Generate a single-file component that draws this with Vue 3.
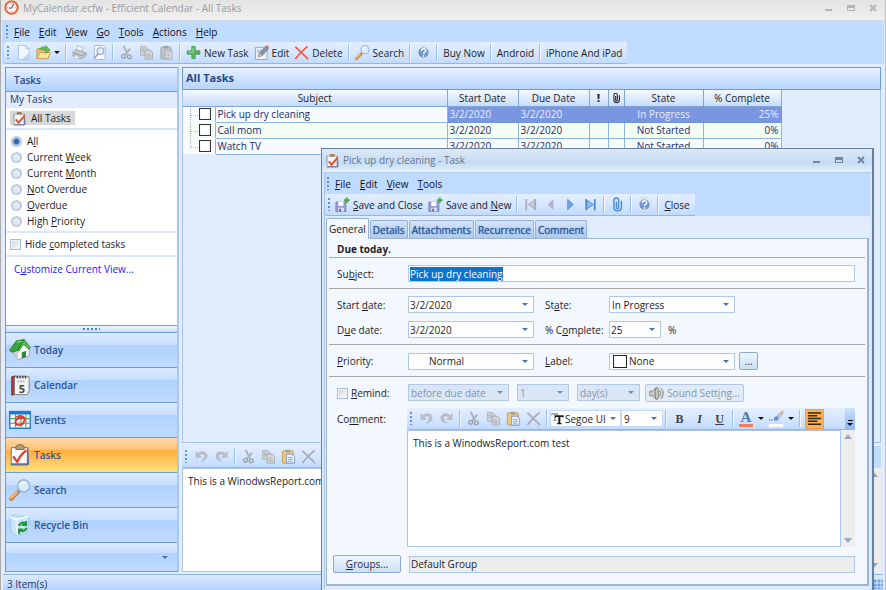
<script setup>
import { h, onMounted, ref } from 'vue'

const Mn = (props) => {
  const [pre, rest] = props.t.includes('&') ? props.t.split('&') : [props.t, '']
  return h('span', rest ? [pre, h('u', rest[0]), rest.slice(1)] : pre)
}
Mn.props = ['t']

const Ic = (props) => h('svg', { class: 'ic', viewBox: '0 0 16 16', 'aria-hidden': 'true' }, [h('use', { href: '#' + props.n })])
Ic.props = ['n']

const menus = ['&File', '&Edit', '&View', '&Go', '&Tools', '&Actions', '&Help']
const dialogMenus = ['&File', '&Edit', '&View', '&Tools']
const views = ['A&ll', 'Current &Week', 'Current &Month', '&Not Overdue', '&Overdue', 'High &Priority']
const view = ref('A&ll')
const tasks = [
  { subject: 'Pick up dry cleaning', state: 'In Progress', done: '25%' },
  { subject: 'Call mom', state: 'Not Started', done: '0%' },
  { subject: 'Watch TV', state: 'Not Started', done: '0%' },
]
const modules = [
  ['Today', 'house'], ['Calendar', 'calendar'], ['Events', 'events'],
  ['Tasks', 'tasks'], ['Search', 'search'], ['Recycle Bin', 'bin'],
]
const tabs = ['General', 'Details', 'Attachments', 'Recurrence', 'Comment']
const comment = ref('This is a WinodwsReport.com test')
const subject = ref('Pick up dry cleaning')
const subjectBox = ref(null)
onMounted(() => {
  subjectBox.value.focus()
  subjectBox.value.select()
})
</script>

<template>
  <svg class="defs" aria-hidden="true">
    <symbol id="logo" viewBox="0 0 16 16"><circle cx="8" cy="8" r="6.6" fill="#f6f0ee" stroke="#dc5b40" stroke-width="2" /><circle cx="8" cy="8" r="7.5" fill="none" stroke="#f0a06a" stroke-width=".7" /><path d="M8 8.500 10.500 4M8 8.500 5.500 9" stroke="#666" stroke-width="1.300" fill="none" /><path d="M8 3v1M13 8h-1M8 13v-1M3 8h1" stroke="#aaa" /></symbol>
    <symbol id="task" viewBox="0 0 16 16"><path d="M1.500 3h12l1 11.500-1.500 1H2z" fill="#6d7c9a" /><path d="M2.500 3.500h10v10.500h-10z" fill="#f2f5fc" /><rect x="5" y="1" width="5.500" height="3" rx="1" fill="#a78355" /><path d="m4 9 3 3.500 6.500-7.500" fill="none" stroke="#e8532f" stroke-width="2.200" /></symbol>
    <symbol id="new" viewBox="0 0 16 16"><path d="M2.500.5h8l3.500 3.500v11.500H2.500z" fill="#f2f8ff" stroke="#a8c4e6" /><path d="M10.500.5V4H14" fill="#cfe1f7" stroke="#a8c4e6" /><path d="M7 15 13.500 8v7z" fill="#bcd8f5" /></symbol>
    <symbol id="open" viewBox="0 0 16 16"><path d="M1 14.500V4h5l1 2h6v8.500z" fill="#ecc466" stroke="#c79b4a" /><path d="m1 14.500 3-6.500h11.500l-3 6.500z" fill="#fbe19a" stroke="#c9a050" /><path d="M3.500 5C5 1.500 9 1 10.500 3V.5l4.500 5-4.500 3.500V6.500C9 5 6 4.500 3.500 5z" fill="#67b95a" stroke="#3f9440" stroke-width=".6" /></symbol>
    <symbol id="print" viewBox="0 0 16 16"><path d="m6 1 6 1.500L10.500 7 4 6z" fill="#f4f6fa" stroke="#a8adb8" stroke-width=".8" /><path d="m1 8 4-3 10 3.500v3L10 15 1 11.500z" fill="#c7cbd3" stroke="#9298a4" stroke-width=".8" /><path d="m1 8 9 3.500 5-3" fill="none" stroke="#8a909c" /><path d="m3 11 5 2-2 2-4-1.500z" fill="#f8f8fa" stroke="#a5a9b2" stroke-width=".6" /></symbol>
    <symbol id="preview" viewBox="0 0 16 16"><path d="M2.500.5h9l2.500 2.500v12.500H2.500z" fill="#f4f7fc" stroke="#a9b9d1" /><circle cx="9" cy="6.500" r="3.600" fill="#dcefff" stroke="#99a9c3" stroke-width="1.200" /><path d="m6.500 9.500-4 4.500" stroke="#a0aabb" stroke-width="2" /></symbol>
    <symbol id="cut" viewBox="0 0 16 16"><path d="m5 1 4.500 9M12 4l-6 6.500" stroke="#aeb1b6" stroke-width="2" /><circle cx="5" cy="12" r="2" fill="none" stroke="#9fa2a8" stroke-width="1.500" /><circle cx="11" cy="12.500" r="2" fill="none" stroke="#9fa2a8" stroke-width="1.500" /></symbol>
    <symbol id="copy" viewBox="0 0 16 16"><path d="M1.500 1.500H7L9.500 4v7h-8z" fill="#cdd0d5" stroke="#b0b4bb" /><path d="M6.500 5.500H12l2.500 2.500v7h-8z" fill="#d5d7da" stroke="#a6aab1" /><path d="M3 4.500h3M3 6.500h3M8 9.500h4M8 11.500h5M8 13h5" stroke="#a6aab1" stroke-width=".8" /></symbol>
    <symbol id="pasteoff" viewBox="0 0 16 16"><rect x="2" y="2" width="11" height="13" rx="1" fill="#bfc2c8" stroke="#a5a9b0" /><rect x="5" y=".8" width="5" height="3" rx="1" fill="#a0a4ac" /><path d="M6.500 6.500h7.500v8.500H6.500z" fill="#dee0e4" stroke="#a6aab1" /><path d="M8 9h4M8 11h4M8 13h4" stroke="#a6aab1" stroke-width=".8" /></symbol>
    <symbol id="paste" viewBox="0 0 16 16"><rect x="1.500" y="2" width="11.500" height="13" rx="1" fill="#f0c878" stroke="#c39c54" /><rect x="4.500" y=".8" width="5.500" height="3" rx="1" fill="#a3a3a0" /><path d="M6 5.500h5.500L14.500 8v7H6z" fill="#eef5ff" stroke="#7f9ac2" /><path d="M7.500 9h5M7.500 11h5M7.500 13h5" stroke="#82a5d6" /></symbol>
    <symbol id="plus" viewBox="0 0 16 16"><path d="M6.200 1.500h3.600v4.700h5v3.600h-5v4.700H6.200V9.800h-5V6.200h5z" fill="#5db767" stroke="#389347" stroke-width=".8" /><path d="M7.500 3v4.500H2.500" stroke="#a5dba0" fill="none" /></symbol>
    <symbol id="pencil" viewBox="0 0 16 16"><path d="M1.500 2.500H11l3 3V15.500H1.500z" fill="#e9f1fb" stroke="#8ba4c6" /><path d="M3 5.500h5M3 7.500h4" stroke="#9bb8dc" /><path d="m4.500 12.500 1-4 7-7L15.500 4l-7 7.500z" fill="#8b92a1" stroke="#5f6675" stroke-width=".6" /><path d="M12.500 1.500 14 0l2 2.500-1 1.500z" fill="#dc6c4c" /><path d="m4.500 12.500 1-4 3 3z" fill="#e5b98d" /></symbol>
    <symbol id="cross" viewBox="0 0 16 16"><path d="M1.500 2C6 6 10 10 15 15M14.500 1.500C9 6 5 10 1.500 15" fill="none" stroke="currentColor" stroke-width="1.700" /></symbol>
    <symbol id="search" viewBox="0 0 24 24"><path d="M2.500 21.500 10.500 13.500" stroke="#c98040" stroke-width="4.500" stroke-linecap="round" /><path d="M2.500 20.500 9 14" stroke="#ffb85c" stroke-width="2.500" stroke-linecap="round" /><path d="m9 15 3-3" stroke="#8894a8" stroke-width="2.500" /><circle cx="16" cy="7.500" r="6.500" fill="#d6eefb" stroke="#9db9db" stroke-width="1.800" /><path d="M12 7a4 4 0 0 1 6-3" stroke="#fff" stroke-width="2" fill="none" /></symbol>
    <symbol id="help" viewBox="0 0 16 16"><circle cx="8" cy="8" r="7.300" fill="#edf2f8" stroke="#cbd4e0" stroke-width=".8" /><circle cx="8" cy="8" r="5.600" fill="#6c98d4" /><path d="M5.800 6.300c0-3 4.600-2.800 4.600-.2C10.400 7.600 8 7.600 8 9.600" fill="none" stroke="#fff" stroke-width="1.600" /><circle cx="8" cy="11.700" r="1" fill="#fff" /></symbol>
    <symbol id="clip" viewBox="0 0 16 16"><path d="M6.800 5v6c0 1.800 2.400 1.800 2.400 0V3.500c0-3.300-5-3.300-5 0V11c0 5 8 5 8 0V4" fill="none" stroke="currentColor" stroke-width="1.500" /></symbol>
    <symbol id="save" viewBox="0 0 16 16"><path d="M1 5.500h10.500v10H1z" fill="#9c9dd6" stroke="#7a7ab6" /><path d="M3.500 5h5.500v4.500H3.500z" fill="#fbfcff" /><path d="M3.500 11.500h6v4h-6z" fill="#e2e4f5" /><path d="M4.500 12.500h2V15.500h-2z" fill="#63659c" /><path d="M12.500.5v6M9.500 3.500h6" stroke="#4da34c" stroke-width="2" /></symbol>
    <symbol id="undo" viewBox="0 0 16 16"><path d="M2 3v6h6L5.800 6.800C8 4.500 12 5 11 8.500c-.5 2-2 3.500-3.500 4.500C13 12 15 8.500 13.500 5.500 11.800 2.500 7 2 4 5z" fill="#bbbfc7" stroke="#a9aeb8" stroke-width=".5" /></symbol>
    <symbol id="first" viewBox="0 0 16 16"><path d="M13 3v10L5.500 8z" fill="#c9ccd2" stroke="#a9aeb8" /><path d="M3.500 2v12M13 2v12" stroke="#a9aeb8" stroke-width="2" /></symbol>
    <symbol id="prev" viewBox="0 0 16 16"><path d="M11 2.500v11L5 8z" fill="#aab3bf" /></symbol>
    <symbol id="next" viewBox="0 0 16 16"><path d="M5 2.500v11L11 8z" fill="#6aa5e4" stroke="#4a85cf" stroke-width=".8" /></symbol>
    <symbol id="last" viewBox="0 0 16 16"><path d="M3.500 3v10L11 8z" fill="#8bbdf0" stroke="#4a85cf" /><path d="M3.500 2v12M12.500 2v12" stroke="#4a85cf" stroke-width="1.800" /></symbol>
    <symbol id="house" viewBox="0 0 24 24"><path d="m3 13 7 9.500 12-4V11l-7-6z" fill="#f7f7f7" stroke="#858585" stroke-width=".8" /><path d="m3 13 7 9.500V14z" fill="#cfcfcf" /><path d="M14 14.500 18.500 13v6.500L14 21z" fill="#27892c" /><path d="M.5 12.500 8 2l8.500-1.500L10 12.500 3.500 14.500z" fill="#36a835" stroke="#1d6f22" stroke-width=".8" /><path d="m16.500.5 7 9-2 1.500L16 5.500l-5.500 8-1-1z" fill="#56c451" stroke="#1d6f22" stroke-width=".8" /><path d="M9 3.500 14 2.500" stroke="#a2e59b" /></symbol>
    <symbol id="calendar" viewBox="0 0 24 24"><path d="m3 3 4-1v20l-4 1z" fill="#b93a36" stroke="#762320" /><path d="M6 3h16v16l-2 3.500H6z" fill="#f5f5f2" stroke="#77777a" /><path d="M20 22v-3h2z" fill="#bbb" /><path d="M9 5V1.500M12 5V1.500M15 5V1.500M18 5V1.500" stroke="#4b4b4e" stroke-width="1.500" /><path d="M9 8h9" stroke="#aaa" stroke-width="2" stroke-dasharray="2 1" /><text x="10.500" y="20.500" font-size="12" font-weight="700" font-family="Open Sans, sans-serif" fill="#454548">5</text></symbol>
    <symbol id="events" viewBox="0 0 24 24"><path d="M.8 3h22.400v18H.8z" fill="#f8fdff" stroke="#2a7bc5" stroke-width="1.500" /><path d="M0 2h24v4H0z" fill="#197cd3" /><path d="M1 10.500h22M1 15.500h22M7 6v14M13 6v14M18.500 6v14" stroke="#5a9b60" stroke-width="1.200" /><path d="M8 9c6-3.500 11 0 8 5.500-2 4-9 4-9 0 0-3 4-6 8-4.500" fill="none" stroke="#e53828" stroke-width="2" /></symbol>
    <symbol id="tasks" viewBox="0 0 24 24"><path d="M2 3.500h19l1 18.500-2 1.500H2z" fill="#617297" /><path d="M3 4.500h16.500V21H3z" fill="#f8faff" /><path d="M7.500 4V2.500L10 .8h4L16.500 2.500V6h-9z" fill="#b59a70" stroke="#786442" /><path d="M4.500 13.500 9 19.500C11 15 14 10.500 19 7" fill="none" stroke="#dc3e1f" stroke-width="2.500" /></symbol>
    <symbol id="bin" viewBox="0 0 24 24"><path d="m1 3 5-2 6 2 10-1.500-2 19-12 3-5-3z" fill="#c7e6fc" stroke="#9bc8ec" /><path d="m1 3 7 3 14-4" fill="none" stroke="#fff" stroke-width="1.500" /><path d="m8 6 1 17" stroke="#e9f7ff" stroke-width="2" /><path d="M11 13c1-4 5-4.500 7-2M18.500 7.500v4.500h-4.500M19 15c-1 4-5 4.500-7 2.500M11 21.500V17h4.500" fill="none" stroke="#25973a" stroke-width="2.400" /></symbol>
    <symbol id="sound" viewBox="0 0 16 16"><path d="M1 5.500h2.500L8 1.500l2 1v11l-2 1-4.500-4H1L0 8z" fill="#c9c9c6" stroke="#848480" /><path d="M8 1.500c-2 3-2 10 0 13" fill="none" stroke="#777" /><path d="M11 5c1.800 1.500 1.800 4.500 0 6M12.500 2.500c3.500 3 3.500 8 0 11" fill="none" stroke="#8b8b88" stroke-width="1.300" /></symbol>
    <symbol id="brush" viewBox="0 0 16 16"><path d="M0 10.500h5" stroke="#5f88cf" stroke-width="1.500" stroke-dasharray="1.500 1" /><path d="M5 11c0-3 1.500-4 3.500-4.500L10.500 9C10 11 8 12 5 11z" fill="#5d8fd2" /><path d="M8.500 6.500 12 3l2 2-3.500 4z" fill="#c7cedb" stroke="#8190a8" stroke-width=".6" /><path d="m12 3 2-2.500L16 2.500 14 5z" fill="#eab25c" /></symbol>
    <symbol id="tt" viewBox="0 0 16 16"><path d="M.5 1.500h8v3L7 3H5.500v7H7v1H3v-1h1V3H2L.5 4.500z" fill="#888" /><path d="M5 4h10.500v3.500L14 6h-2.500v7.500H13V15H7.500v-1.500H9V6H6.500L5 7.500z" fill="#1c1c1c" /></symbol>
    <symbol id="para" viewBox="0 0 16 16"><path d="M1 2h14M1 5h10M1 8h14M1 11h10M1 14h14" stroke="#2e2517" stroke-width="1.600" /></symbol>
  </svg>

  <div class="window">
    <header class="titlebar">
      <Ic n="logo" />
      <h1>MyCalendar.ecfw - Efficient Calendar - All Tasks</h1>
      <div class="winbtns">
        <button aria-label="Minimize"><i class="min" /></button>
        <button aria-label="Maximize"><i class="max" /></button>
        <button aria-label="Close"><svg viewBox="0 0 8 8"><path d="m1 1 6 6M7 1 1 7" stroke="currentColor" stroke-width="2" /></svg></button>
      </div>
    </header>

    <nav class="menubar">
      <i class="grip" />
      <button v-for="m in menus" :key="m"><Mn :t="m" /></button>
    </nav>

    <div class="strip top">
      <div class="toolbar">
        <i class="grip" />
        <button aria-label="New"><Ic n="new" /></button>
        <button aria-label="Open"><Ic n="open" /><i class="caret" /></button>
        <i class="sep" />
        <button aria-label="Print"><Ic n="print" /></button>
        <button aria-label="Print preview"><Ic n="preview" /></button>
        <i class="sep" />
        <button aria-label="Cut"><Ic n="cut" /></button>
        <button aria-label="Copy"><Ic n="copy" /></button>
        <button aria-label="Paste"><Ic n="pasteoff" /></button>
        <i class="sep" />
        <button><Ic n="plus" />New Task</button>
        <button><Ic n="pencil" />Edit</button>
        <button class="red"><Ic n="cross" /><span>Delete</span></button>
        <i class="sep" />
        <button><Ic n="search" />Search</button>
        <i class="sep" />
        <button aria-label="Help"><Ic n="help" /></button>
        <i class="sep" />
        <button>Buy Now</button>
        <i class="sep" />
        <button>Android</button>
        <i class="sep" />
        <button>iPhone And iPad</button>
      </div>
    </div>

    <div class="workspace">
      <aside class="sidebar">
        <h2>Tasks</h2>
        <h3>My Tasks</h3>
        <div class="folder"><button><Ic n="task" />All Tasks</button></div>
        <fieldset>
          <label v-for="v in views" :key="v">
            <input v-model="view" type="radio" name="view" :value="v">
            <Mn :t="v" />
          </label>
        </fieldset>
        <label class="hide"><input type="checkbox"><Mn t="Hide &completed tasks" /></label>
        <a class="customize" href="#"><Mn t="C&ustomize Current View..." /></a>
        <div class="splitter"><i /></div>
        <nav class="modules">
          <button v-for="[name, icon] in modules" :key="name" :class="{ active: name === 'Tasks' }"><Ic :n="icon" />{{ name }}</button>
          <div class="more"><i class="caret" /></div>
        </nav>
      </aside>

      <main>
        <h2>All Tasks</h2>
        <section class="list">
          <table>
            <colgroup><col class="c-tree"><col class="c-subject"><col class="c-date"><col class="c-date"><col class="c-flag"><col class="c-clip"><col class="c-state"><col class="c-done"></colgroup>
            <thead>
              <tr><th colspan="2">Subject</th><th>Start Date</th><th>Due Date</th><th class="bang">!</th><th><Ic n="clip" /></th><th>State</th><th>% Complete</th></tr>
            </thead>
            <tbody>
              <tr v-for="(t, i) in tasks" :key="t.subject" :class="{ selected: i === 0 }">
                <td class="tree"><div><i /><input type="checkbox" :aria-label="t.subject"></div></td>
                <td class="subject">{{ t.subject }}</td>
                <td>3/2/2020</td><td>3/2/2020</td><td /><td />
                <td class="mid">{{ t.state }}</td>
                <td class="end">{{ t.done }}</td>
              </tr>
            </tbody>
          </table>
        </section>
        <div class="strip">
          <div class="toolbar">
            <i class="grip" />
            <button aria-label="Undo"><Ic n="undo" /></button>
            <button aria-label="Redo" class="flip"><Ic n="undo" /></button>
            <i class="sep" />
            <button aria-label="Cut"><Ic n="cut" /></button>
            <button aria-label="Copy"><Ic n="copy" /></button>
            <button aria-label="Paste"><Ic n="paste" /></button>
            <button aria-label="Delete" class="gray"><Ic n="cross" /></button>
          </div>
        </div>
        <div class="preview">
          <textarea v-model="comment" aria-label="Comment preview" />
          <div class="scroll"><i class="up" /><i class="down" /></div>
        </div>
      </main>
    </div>

    <footer>3 Item(s)<i class="corner" /></footer>

    <div class="dialog" role="dialog" aria-labelledby="dlg-title">
      <header class="titlebar">
        <Ic n="task" />
        <h1 id="dlg-title">Pick up dry cleaning - Task</h1>
        <div class="winbtns">
          <button aria-label="Minimize"><i class="min" /></button>
          <button aria-label="Maximize"><i class="max" /></button>
          <button aria-label="Close"><svg viewBox="0 0 8 8"><path d="m1 1 6 6M7 1 1 7" stroke="currentColor" stroke-width="2" /></svg></button>
        </div>
      </header>
      <div class="dlgbody">
        <nav class="menubar">
          <i class="grip" />
          <button v-for="m in dialogMenus" :key="m"><Mn :t="m" /></button>
        </nav>
        <div class="strip">
          <div class="toolbar">
            <i class="grip" />
            <button><Ic n="save" /><Mn t="&Save and Close" /></button>
            <button><Ic n="save" /><Mn t="Save and &New" /></button>
            <i class="sep" />
            <button aria-label="First"><Ic n="first" /></button>
            <button aria-label="Previous"><Ic n="prev" /></button>
            <button aria-label="Next"><Ic n="next" /></button>
            <button aria-label="Last"><Ic n="last" /></button>
            <i class="sep" />
            <button class="blue" aria-label="Attach"><Ic n="clip" /></button>
            <i class="sep" />
            <button aria-label="Help"><Ic n="help" /></button>
            <i class="sep" />
            <button><Mn t="&Close" /></button>
          </div>
        </div>
        <div class="tabs" role="tablist">
          <button v-for="(t, i) in tabs" :key="t" role="tab" :aria-selected="i === 0">{{ t }}</button>
        </div>
        <form class="panel" @submit.prevent>
          <p class="due">Due today.</p>
          <div class="group">
            <label for="subject"><Mn t="Su&bject:" /></label>
            <input id="subject" ref="subjectBox" v-model="subject" class="box full" type="text">
          </div>
          <div class="group">
            <label for="start"><Mn t="Start &date:" /></label>
            <div class="combo"><input id="start" type="text" value="3/2/2020"><button type="button" aria-label="Pick start date"><i class="caret" /></button></div>
            <label for="state" class="second"><Mn t="St&ate:" /></label>
            <div class="pick"><select id="state"><option>In Progress</option></select><i class="caret" /></div>
            <label for="end" class="first"><Mn t="D&ue date:" /></label>
            <div class="combo"><input id="end" type="text" value="3/2/2020"><button type="button" aria-label="Pick due date"><i class="caret" /></button></div>
            <label for="pct" class="second"><Mn t="% C&omplete:" /></label>
            <div class="row"><div class="combo short"><input id="pct" type="text" value="25"><button type="button" aria-label="Pick percentage"><i class="caret" /></button></div>%</div>
          </div>
          <div class="group">
            <label for="priority"><Mn t="&Priority:" /></label>
            <div class="pick indent"><select id="priority"><option>Normal</option></select><i class="caret" /></div>
            <label for="label" class="second"><Mn t="&Label:" /></label>
            <div class="pick"><i class="chip" /><select id="label"><option>None</option></select><i class="caret" /></div>
            <button type="button" class="push dots" aria-label="Edit labels">...</button>
          </div>
          <div class="group last">
            <label class="remind"><input type="checkbox"><Mn t="&Remind:" /></label>
            <div class="reminders">
              <div class="pick off when"><select disabled aria-label="When"><option>before due date</option></select><i class="caret" /></div>
              <div class="pick off count"><select disabled aria-label="Count"><option>1</option></select><i class="caret" /></div>
              <div class="pick off unit"><select disabled aria-label="Unit"><option>day(s)</option></select><i class="caret" /></div>
              <button type="button" class="push sound" disabled><Ic n="sound" /><Mn t="Sound Sett&ing..." /></button>
            </div>
          </div>
          <div class="commentrow">
            <label for="comment"><Mn t="Co&mment:" /></label>
            <div class="editor">
              <div class="toolbar">
                <i class="grip" />
                <button type="button" aria-label="Undo"><Ic n="undo" /></button>
                <button type="button" aria-label="Redo" class="flip"><Ic n="undo" /></button>
                <i class="sep" />
                <button type="button" aria-label="Cut"><Ic n="cut" /></button>
                <button type="button" aria-label="Copy"><Ic n="copy" /></button>
                <button type="button" aria-label="Paste"><Ic n="paste" /></button>
                <button type="button" aria-label="Delete" class="gray"><Ic n="cross" /></button>
                <i class="sep" />
                <div class="fonts">
                  <div class="pick font"><Ic n="tt" /><select aria-label="Font"><option>Segoe UI</option></select><i class="caret" /></div>
                  <div class="pick size"><select aria-label="Size"><option>9</option></select><i class="caret" /></div>
                </div>
                <i class="sep" />
                <button type="button" class="glyph">B</button>
                <button type="button" class="glyph ital">I</button>
                <button type="button" class="glyph under">U</button>
                <i class="sep" />
                <button type="button" class="colour" aria-label="Text colour"><span class="letter">A</span></button><i class="caret" />
                <button type="button" class="colour light" aria-label="Highlight"><Ic n="brush" /></button><i class="caret" />
                <i class="sep" />
                <button type="button" class="pressed" aria-label="Align left"><Ic n="para" /></button>
                <span class="overflow"><i class="dash" /><i class="caret" /></span>
              </div>
              <div class="preview">
                <textarea id="comment" v-model="comment" />
                <div class="scroll"><i class="up" /><i class="down" /></div>
              </div>
            </div>
          </div>
          <div class="groupsrow">
            <button type="button" class="push"><Mn t="&Groups..." /></button>
            <input class="box readonly" type="text" value="Default Group" readonly aria-label="Groups">
          </div>
        </form>
      </div>
    </div>
  </div>
</template>

<style>
body { overflow: hidden; }
#app .ic { width: 15px; height: 15px; flex: none; display: block; }
</style>

<style scoped>
.defs { display: none; }
.window, .window * { box-sizing: border-box; }
.window {
  position: relative; display: flex; flex-direction: column; min-height: 100vh;
  padding: 0 4px; border-left: 1px solid #aaa; border-right: 1px solid #c3bdbd;
  background: #e1edfe; color: #1c1c26; font: 10px/14px "Open Sans", "Noto Sans", sans-serif;
}
button, input, select, textarea { font: inherit; color: inherit; margin: 0; }
button { display: flex; align-items: center; padding: 0; border: 0; background: none; white-space: nowrap; }
h1, h2, h3, p { margin: 0; font-size: inherit; font-weight: 400; }
select { appearance: none; border: 0; outline: 0; background: none; opacity: 1; }

.titlebar { display: flex; align-items: center; gap: 4px; height: 21px; margin: 0 -4px; padding: 0 8px 5px 3px; background: linear-gradient(#e4e4e4, #efefef); border-bottom: 1px solid #d4dbe4; color: #9b9b9b; }
.titlebar h1 { flex: 1; }
.winbtns { display: flex; gap: 14px; }
.winbtns button { width: 8px; height: 8px; color: #b5b5b5; }
.winbtns svg { width: 8px; height: 8px; }
.min { width: 7px; height: 2px; margin-top: 4px; background: currentColor; }
.max { width: 8px; height: 6px; border: 1px solid currentColor; border-top-width: 3px; }

.menubar { display: flex; align-items: center; height: 21px; gap: 9px; margin: 0 -3px; padding-left: 4px; background: #bfdbff; color: #10101c; }
.menubar .grip { margin-right: -3px; }
.grip { flex: none; width: 2px; height: 13px; background: repeating-linear-gradient(#5f93d8 0 2px, transparent 2px 4px); }
.strip { display: flex; background: #bfdbff; flex: none; }
.top { margin: 0 -3px; padding-left: 2px; }
.toolbar { display: flex; align-items: center; gap: 5px; height: 22px; padding: 0 5px 0 3px; background: linear-gradient(#e3efff, #d3e5ff 55%, #c1dbff); border-bottom: 1px solid #8db8ee; border-radius: 3px 0 0 3px; }
.toolbar button { gap: 3px; }
.toolbar .grip { margin-right: 2px; }
.sep { flex: none; width: 2px; height: 17px; border-left: 1px solid #9abfee; border-right: 1px solid #f4f9ff; }
.caret { flex: none; display: inline-block; width: 0; height: 0; border: 3px solid transparent; border-top-color: #4472b0; border-bottom: 0; }
.toolbar > button .caret, .toolbar > .caret { border-top-color: #151515; }
.red { color: #ee5a3a; }
.red span { color: #1c1c26; }
.gray { color: #a6a9af; }
.blue { color: #4a88d0; }
.flip .ic { transform: scaleX(-1); }

.workspace { flex: 1; display: flex; gap: 3px; padding-top: 3px; }
.sidebar { display: flex; flex-direction: column; width: 174px; border: 1px solid #6d9bd6; border-right: 2px solid #a9c7ee; background: #fff; }
.sidebar h2 { height: 24px; padding: 5px 8px; font-weight: 600; color: #1d4788; background: linear-gradient(#e3efff, #c3dcff 60%, #afd2ff); border-bottom: 1px solid #6d9bd6; }
.sidebar h3 { height: 16px; padding-left: 4px; color: #23366e; background: #e1edfe; }
.folder { padding: 3px 4px; border-bottom: 2px solid #dae8fb; }
.folder button { height: 14px; gap: 4px; padding: 0 4px 0 2px; background: #d8d8d8; }
fieldset { display: flex; flex-direction: column; margin: 0; padding: 3px 5px 2px; border: 0; border-bottom: 2px solid #dae8fb; }
fieldset label { display: flex; align-items: center; gap: 5px; height: 16px; }
input[type=radio] { appearance: none; width: 11px; height: 11px; border: 2px solid #bccce0; border-radius: 50%; background: #e2eaf4; }
input[type=radio]:checked { background: radial-gradient(#2d66ad 0 2px, #c5daf0 4px); }
input[type=checkbox] { appearance: none; flex: none; width: 11px; height: 11px; border: 1px solid #a9bcd6; background: linear-gradient(135deg, #cfd3da, #fff); box-shadow: inset 0 0 0 1px #f0f5fb; }
.hide { display: flex; align-items: center; gap: 4px; height: 24px; padding-left: 4px; border-bottom: 2px solid #dae8fb; }
.customize { flex: 1; padding: 5px 8px; color: #1c1cf0; text-decoration: none; }
.splitter { display: grid; place-items: center; height: 7px; border-top: 1px solid #6d9bd6; background: linear-gradient(#f1f7ff, #c9dfff); }
.splitter i { width: 17px; height: 2px; background: repeating-linear-gradient(90deg, #4f82c9 0 2px, transparent 2px 4px); }
.modules button, .more { width: 100%; height: 35px; gap: 3px; padding-left: 3px; border-top: 1px solid #6d9bd6; font-weight: 600; color: #2c5591; background: linear-gradient(#dcebff, #c9dfff 35%, #b0d2ff 36%, #c0dbff); }
.modules .active { background: linear-gradient(#ffd9ac, #ffc173 35%, #ffac40 36%, #ffe07c); }
#app .modules .ic { width: 22px; height: 22px; }
.more { display: flex; align-items: center; justify-content: flex-end; height: 29px; padding-right: 9px; }

main { flex: 1; display: flex; flex-direction: column; min-width: 0; }
main h2 { height: 23px; padding: 3px; font-size: 11px; font-weight: 700; color: #23498b; border: 1px solid #6d9bd6; background: linear-gradient(#e7f1ff, #c9dfff 60%, #b6d5ff); }
.list { flex: 1; margin-bottom: 3px; border: 1px solid #a9c5ea; border-top: 0; overflow: hidden; }
table { table-layout: fixed; width: 598px; border-collapse: collapse; }
.c-tree { width: 32px; } .c-subject { width: 232px; } .c-date { width: 71px; } .c-flag { width: 19px; } .c-clip { width: 16px; } .c-state { width: 79px; } .c-done { width: 78px; }
th { height: 16px; padding: 0; font-weight: 400; border: 1px solid #7fa5d9; border-top: 0; background: linear-gradient(#f5f9ff, #c6dcfb); }
th:first-child { border-left: 0; }
.bang { font-weight: 800; }
#app th .ic { width: 11px; height: 12px; margin: auto; }
td { height: 16px; padding: 0 2px; border: 1px solid #8fb3e0; line-height: 14px; color: #1d2a6d; background: #f5fbff; }
tr:nth-child(2) td { background: #f4fdf3; }
.selected td:nth-child(n+3) { background: #7b96e0; color: #e8efff; border-color: #7095d8; }
td.tree { padding: 0; border: 0; border-bottom: 1px solid transparent; background: #fafdff; }
.tree div { display: flex; align-items: center; height: 15px; padding-left: 7px; }
.tree i { width: 9px; align-self: stretch; border-left: 1px dotted #8fb0d8; background: linear-gradient(90deg, #a9c2e0 1px, transparent 1px) 0 8px / 2px 1px repeat-x; }
tr:last-child .tree i { height: 9px; }
.tree input[type=checkbox] { width: 12px; height: 12px; border-color: #333; background: #fff; }
.mid { text-align: center; }
.end { text-align: right; }
.preview { display: flex; }
.preview textarea { flex: 1; min-width: 0; padding: 5px; border: 1px solid #a9c5ea; outline: 0; resize: none; background: #fff; line-height: 14px; overflow: hidden; }
main .preview { height: 104px; }
.scroll { display: flex; flex-direction: column; justify-content: space-between; align-items: center; width: 14px; padding: 4px 0; background: #ededed; }
.scroll i { border: 4px solid transparent; }
.scroll .up { border-bottom: 5px solid #96a8c3; border-top: 0; }
.scroll .down { border-top: 5px solid #96a8c3; border-bottom: 0; }

footer { display: flex; justify-content: space-between; align-items: center; height: 16px; margin: 2px -2px 0; padding: 2px 0 0 4px; border-top: 1px solid #8db5ea; background: linear-gradient(#dcebff, #b1d2ff); color: #23366e; }
.corner { width: 10px; height: 10px; background: radial-gradient(circle, #6f9fdc 1px, transparent 2px) 0 0 / 4px 4px; }

/* Task window floating above the main window */
.dialog { position: absolute; top: 148px; left: 320px; right: 11px; bottom: 0; display: flex; flex-direction: column; border: 1px solid #67819f; border-width: 1px 2px 0 1px; background: #d8e8fb; }
.dialog .titlebar { height: 24px; gap: 3px; margin: 0; padding: 0 7px 1px 3px; background: linear-gradient(#dce8f6, #c4dcf5 60%, #e3f1fd); border-bottom: 1px solid #b5cfee; color: #64748c; }
.dialog .titlebar .winbtns button { color: #7285a3; }
.dialog .menubar { margin: 0; padding-left: 2px; }
.dlgbody { flex: 1; display: flex; flex-direction: column; margin: 0 2px 1px; background: #e1edfe; border-left: 1px solid #a9c3e4; }
.dialog .strip .grip { margin-right: 0; }
.tabs { display: flex; gap: 1px; height: 22px; padding: 1px 0 0 1px; align-items: end; }
.tabs button { height: 18px; padding: 0 2px; color: #2e5a9c; text-shadow: 0 0 1px #2e5a9c; background: linear-gradient(#d3e3f8, #aecbf0); border: 1px solid #95b1d7; border-bottom: 0; border-radius: 2px 2px 0 0; }
.tabs button[aria-selected=true] { height: 21px; margin-bottom: -1px; z-index: 1; color: #16161e; text-shadow: none; background: #f3f7fe; }
.panel { flex: 1; display: flex; flex-direction: column; margin: 0 1px 3px 1px; padding: 0 2px 11px; background: #f3f7fe; border: 1px solid #9bb4d6; border-right-width: 2px; border-bottom-width: 2px; }
.due { height: 19px; padding: 3px 8px; font-weight: 700; border-bottom: 1px solid #a9a9ab; }
.group { display: grid; grid-template-columns: 71px 126px 75px 126px auto; justify-content: start; align-items: center; row-gap: 8px; padding: 7px 10px 6px 8px; border-bottom: 1px solid #a9a9ab; }
.group:has(.full), .last { grid-template-columns: 71px 1fr; justify-content: stretch; }
.first { grid-column: 1; }
.second { padding-left: 11px; }
.last { border-bottom: 0; }
.box, .combo, .pick { height: 17px; border: 1px solid #b0c7e6; background: #fff; }
.box { padding: 0 1px; outline: 0; border-radius: 0; min-width: 0; }
.box::selection { background: #0d72d0; color: #fff; }
.combo { display: flex; }
.combo input { flex: 1; min-width: 0; padding: 0 1px; border: 0; outline: 0; background: none; }
.combo button { padding-right: 5px; }
.short { width: 52px; }
.row { display: flex; align-items: center; gap: 7px; }
.pick { display: flex; align-items: center; padding-right: 5px; }
.pick select { flex: 1; min-width: 0; padding: 0 2px; }
.indent select { padding-left: 20px; }
.chip { width: 14px; height: 13px; margin-left: 3px; border: 1px solid #222; }
.push { justify-content: center; height: 18px; gap: 3px; border: 1px solid #8aa8d0; border-radius: 2px; background: linear-gradient(#eef5fe, #cddff5); color: #1c2a44; }
.dots { width: 19px; margin-left: 4px; }
.remind { display: flex; align-items: center; gap: 3px; }
.reminders { display: flex; gap: 8px; }
.off { background: #d9e6f7; color: #8794a8; border-color: #b5c8e2; }
.off .caret { border-top-color: #7f8da0; }
.when { width: 101px; } .count { width: 52px; } .unit { width: 63px; }
.sound { width: 99px; margin-left: -3px; color: #8a94a4; background: #e1ebf8; border-color: #b5c8e2; }
.commentrow { flex: 1; display: flex; padding: 0 10px 0 8px; }
.commentrow label { width: 70px; padding-top: 4px; }
.editor { flex: 1; display: flex; flex-direction: column; min-width: 0; }
.editor .preview { flex: 1; }
.editor .toolbar { padding-right: 0; }
.fonts { display: flex; margin: 0 -3px; }
.fonts .pick { border-color: #c5d9f3; }
.font { width: 71px; gap: 1px; }
.fonts .font { padding-right: 4px; }
.fonts .font select { padding: 0; }
#app .fonts .ic { width: 13px; height: 13px; }
.size { width: 42px; }
.glyph { width: 15px; justify-content: center; font: 700 12px/14px "Liberation Serif", serif; color: #3e3e44; }
.toolbar .ital { font-style: italic; }
.under { text-decoration: underline; }
.colour { flex: none; width: 14px; height: 17px; border-bottom: 3px solid #f27d5d; justify-content: center; }
.light { border-bottom-color: #fff; }
.letter { font: 700 15px/14px "Liberation Serif", serif; color: #5778ab; }
.toolbar .pressed { width: 19px; height: 20px; justify-content: center; background: #ffb04b; border: 1px solid #f2a04a; margin-left: -1px; }
.overflow { align-self: stretch; display: flex; flex-direction: column; align-items: center; justify-content: flex-end; gap: 2px; width: 10px; margin-left: auto; padding-bottom: 3px; background: linear-gradient(#cfe2fd, #8db8ee); }
.dash { width: 5px; height: 1px; background: #111; }
.overflow .caret { border-top-color: #111; }
.groupsrow { display: flex; gap: 8px; padding: 8px 10px 0 4px; align-items: center; }
.groupsrow .push { width: 68px; }
.readonly { flex: 1; background: #ededed; }
</style>
